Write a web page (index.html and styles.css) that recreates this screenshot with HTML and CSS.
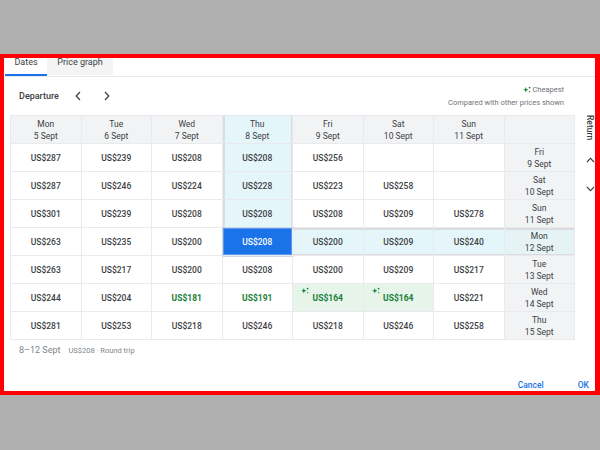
FILE: index.html
```html
<!DOCTYPE html>
<html>
<head>
<meta charset="utf-8">
<link rel="stylesheet" href="styles.css">
</head>
<body>
<div class="frame">
  <div class="tabs">
    <div class="tab active">Dates</div>
    <div class="tab muted">Price graph</div>
  </div>
  <div class="toolbar">
    <span class="dep">Departure</span>
    <span class="chev"><svg width="6" height="10" viewBox="0 0 6 10"><path d="M5 1 L1.2 5 L5 9" fill="none" stroke="#3c4043" stroke-width="1.2"/></svg></span>
    <span class="chev"><svg width="6" height="10" viewBox="0 0 6 10"><path d="M1 1 L4.8 5 L1 9" fill="none" stroke="#3c4043" stroke-width="1.2"/></svg></span>
    <div class="legend">
      <div class="leg1"><svg class="spark" width="8" height="7" viewBox="0 0 8 7"><path d="M2.8 1 L3.5 3 L5.5 3.7 L3.5 4.4 L2.8 6.4 L2.1 4.4 L0.1 3.7 L2.1 3 Z" fill="#188038"/><circle cx="6.6" cy="1.6" r="0.9" fill="#188038"/><circle cx="6.6" cy="5.6" r="0.7" fill="#188038"/></svg>Cheapest</div>
      <div class="leg2">Compared with other prices shown</div>
    </div>
  </div>
  <div class="main">
    <div class="grid">
      <div class="cell head">Mon<br>5 Sept</div>
      <div class="cell head">Tue<br>6 Sept</div>
      <div class="cell head">Wed<br>7 Sept</div>
      <div class="cell head col">Thu<br>8 Sept</div>
      <div class="cell head">Fri<br>9 Sept</div>
      <div class="cell head">Sat<br>10 Sept</div>
      <div class="cell head">Sun<br>11 Sept</div>
      <div class="cell head"></div>

      <div class="cell">US$287</div><div class="cell">US$239</div><div class="cell">US$208</div><div class="cell col">US$208</div><div class="cell">US$256</div><div class="cell"></div><div class="cell"></div><div class="cell ret">Fri<br>9 Sept</div>

      <div class="cell">US$287</div><div class="cell">US$246</div><div class="cell">US$224</div><div class="cell col">US$228</div><div class="cell">US$223</div><div class="cell">US$258</div><div class="cell"></div><div class="cell ret">Sat<br>10 Sept</div>

      <div class="cell">US$301</div><div class="cell">US$239</div><div class="cell">US$208</div><div class="cell col">US$208</div><div class="cell">US$208</div><div class="cell">US$209</div><div class="cell">US$278</div><div class="cell ret">Sun<br>11 Sept</div>

      <div class="cell">US$263</div><div class="cell">US$235</div><div class="cell">US$200</div><div class="cell sel">US$208</div><div class="cell row">US$200</div><div class="cell row">US$209</div><div class="cell row">US$240</div><div class="cell ret row">Mon<br>12 Sept</div>

      <div class="cell">US$263</div><div class="cell">US$217</div><div class="cell">US$200</div><div class="cell">US$208</div><div class="cell">US$200</div><div class="cell">US$209</div><div class="cell">US$217</div><div class="cell ret">Tue<br>13 Sept</div>

      <div class="cell">US$244</div><div class="cell">US$204</div><div class="cell green">US$181</div><div class="cell green">US$191</div>
      <div class="cell green best"><svg class="spark-cell" width="8" height="7" viewBox="0 0 8 7"><path d="M2.8 1 L3.5 3 L5.5 3.7 L3.5 4.4 L2.8 6.4 L2.1 4.4 L0.1 3.7 L2.1 3 Z" fill="#188038"/><circle cx="6.6" cy="1.6" r="0.9" fill="#188038"/><circle cx="6.6" cy="5.6" r="0.7" fill="#188038"/></svg>US$164</div>
      <div class="cell green best"><svg class="spark-cell" width="8" height="7" viewBox="0 0 8 7"><path d="M2.8 1 L3.5 3 L5.5 3.7 L3.5 4.4 L2.8 6.4 L2.1 4.4 L0.1 3.7 L2.1 3 Z" fill="#188038"/><circle cx="6.6" cy="1.6" r="0.9" fill="#188038"/><circle cx="6.6" cy="5.6" r="0.7" fill="#188038"/></svg>US$164</div>
      <div class="cell">US$221</div><div class="cell ret">Wed<br>14 Sept</div>

      <div class="cell">US$281</div><div class="cell">US$253</div><div class="cell">US$218</div><div class="cell">US$246</div><div class="cell">US$218</div><div class="cell">US$246</div><div class="cell">US$258</div><div class="cell ret">Thu<br>15 Sept</div>
    </div>
    <div class="side">
      <div class="ret-label">Return</div>
      <svg class="side-chev up" width="9" height="6" viewBox="0 0 9 6"><path d="M1 5 L4.5 1.3 L8 5" fill="none" stroke="#3c4043" stroke-width="1.1"/></svg>
      <svg class="side-chev" width="9" height="6" viewBox="0 0 9 6"><path d="M1 1 L4.5 4.7 L8 1" fill="none" stroke="#3c4043" stroke-width="1.1"/></svg>
    </div>
  </div>
  <div class="summary">
    <span class="sum-dates">8–12 Sept</span>
    <span class="sum-price">US$208 · Round trip</span>
  </div>
  <div class="actions">
    <span class="btn">Cancel</span>
    <span class="btn">OK</span>
  </div>
</div>
</body>
</html>
```

FILE: styles.css
```css
html, body {
  margin: 0;
  padding: 0;
}
body {
  background: #b0b0b0;
  width: 600px;
  height: 450px;
  padding-top: 54px;
  box-sizing: border-box;
  font-family: Roboto, "Noto Sans", sans-serif;
  color: #3c4043;
}
.frame {
  box-sizing: border-box;
  width: 600px;
  height: 341px;
  border: 4px solid #ff0000;
  border-right-width: 5px;
  background: #ffffff;
  display: flex;
  flex-direction: column;
  overflow: hidden;
}
.tabs {
  display: flex;
  height: 18px;
  border-bottom: 1px solid #e8eaed;
  padding-left: 1px;
  flex-shrink: 0;
}
.tab {
  font-size: 9px;
  line-height: 9px;
  box-sizing: border-box;
  height: 18px;
  text-align: center;
  color: #3c4043;
}
.tab.active {
  width: 42px;
  border-bottom: 2px solid #1a73e8;
}
.tab.muted {
  width: 66px;
  background: #f4f4f5;
  height: 17px;
}
.toolbar {
  height: 38px;
  display: flex;
  align-items: center;
  padding: 0 31px 0 15px;
  flex-shrink: 0;
}
.dep {
  font-size: 9px;
  font-weight: 500;
  color: #3c4043;
}
.chev {
  width: 20px;
  display: flex;
  justify-content: center;
  margin-left: 9px;
}
.legend {
  margin-left: auto;
  text-align: right;
  color: #70757a;
  font-size: 7.5px;
}
.leg1, .leg2 {
  line-height: 13px;
}
.leg1 {
  display: flex;
  align-items: center;
  justify-content: flex-end;
}
.spark {
  margin-right: 1px;
}
.main {
  display: flex;
  height: 225px;
  flex-shrink: 0;
}
.grid {
  margin-left: 6px;
  display: grid;
  grid-template-columns: repeat(8, 70.5px);
  grid-auto-rows: 28px;
  border-left: 1px solid #e8eaed;
  border-top: 1px solid #e8eaed;
  align-self: flex-start;
}
.cell {
  box-sizing: border-box;
  border-right: 1px solid #e8eaed;
  border-bottom: 1px solid #e8eaed;
  display: flex;
  align-items: center;
  justify-content: center;
  text-align: center;
  font-size: 8.5px;
  font-weight: 500;
  color: #3c4043;
  position: relative;
}
.head, .ret {
  background: #f1f3f4;
  font-weight: 400;
  line-height: 12px;
}
.col {
  background: #e5f6fa;
  box-shadow: inset 2px 0 #dadce0, inset -1px 0 #dadce0;
}
.row {
  background: #e5f6fa;
  box-shadow: inset 0 2px #dadce0, inset 0 -1px #dadce0;
}
.ret.row {
  background: #e6f3f6;
}
.sel {
  background: #1a73e8;
  color: #ffffff;
  box-shadow: inset 0 0 0 1px #5e97f0, 0 0 0 1px #cfd8e3;
}
.green {
  color: #188038;
  font-weight: 700;
}
.best {
  background: #e6f4ea;
}
.spark-cell {
  position: absolute;
  left: 8px;
  top: 3px;
}
.side {
  margin-left: 10px;
  width: 12px;
  display: flex;
  flex-direction: column;
  align-items: center;
}
.ret-label {
  writing-mode: vertical-rl;
  font-size: 8.5px;
  font-weight: 500;
  line-height: 10px;
  color: #3c4043;
}
.side-chev.up {
  margin-top: 17px;
}
.side-chev {
  margin-top: 23px;
}
.summary {
  height: 20px;
  display: flex;
  align-items: center;
  padding-left: 15px;
  gap: 8px;
  flex-shrink: 0;
}
.sum-dates {
  font-size: 9px;
  color: #80868b;
}
.sum-price {
  font-size: 7.5px;
  color: #80868b;
}
.actions {
  margin-top: auto;
  height: 13px;
  display: flex;
  justify-content: flex-end;
  align-items: center;
  gap: 34px;
  padding-right: 6px;
}
.btn {
  font-size: 8.5px;
  font-weight: 500;
  color: #1a73e8;
}
```
